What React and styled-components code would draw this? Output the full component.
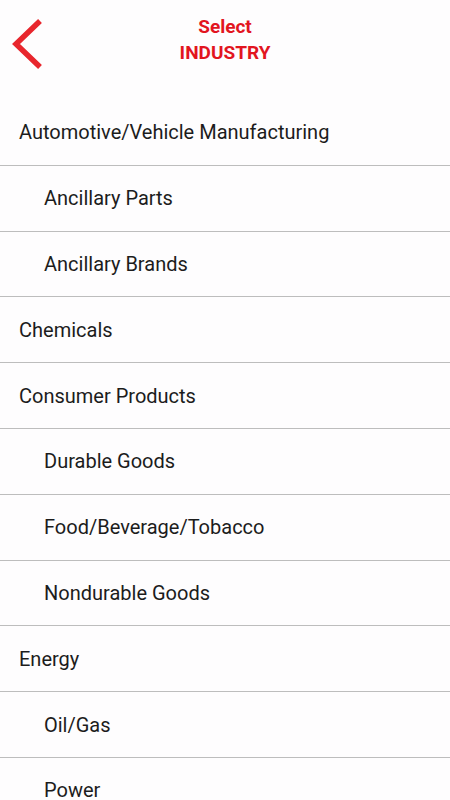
import React from 'react';
import styled, { createGlobalStyle } from 'styled-components';

const GlobalStyle = createGlobalStyle`
  body {
    margin: 0;
    background: #fefdfe;
    font-family: Roboto, "Noto Sans", sans-serif;
  }
`;

const items = [
  { label: 'Automotive/Vehicle Manufacturing' },
  { label: 'Ancillary Parts', sub: true },
  { label: 'Ancillary Brands', sub: true },
  { label: 'Chemicals' },
  { label: 'Consumer Products' },
  { label: 'Durable Goods', sub: true },
  { label: 'Food/Beverage/Tobacco', sub: true },
  { label: 'Nondurable Goods', sub: true },
  { label: 'Energy' },
  { label: 'Oil/Gas', sub: true },
  { label: 'Power', sub: true },
];

const App = () => {
  return (
    <Screen>
      <GlobalStyle />
      <Header>
        <BackButton aria-label="Back">
          <svg width="34" height="54" viewBox="0 0 34 54">
            <polyline
              points="30,4 6,27 30,50"
              fill="none"
              stroke="#e8262d"
              strokeWidth="5.5"
            />
          </svg>
        </BackButton>
        <Title>
          <span>Select</span>
          <span>INDUSTRY</span>
        </Title>
      </Header>
      <List>
        {items.map((el, index) => (
          <Row key={index} $sub={el.sub}>
            {el.label}
          </Row>
        ))}
      </List>
    </Screen>
  );
};

const Screen = styled.div`
  width: 450px;
  height: 800px;
  overflow: hidden;
  background: #fefdfe;
`;

const Header = styled.header`
  position: relative;
  height: 100px;
  display: flex;
  justify-content: center;
`;

const BackButton = styled.button`
  position: absolute;
  left: 10px;
  top: 17px;
  padding: 0;
  border: none;
  background: none;
  display: flex;
`;

const Title = styled.h1`
  margin: 14px 0 0;
  display: flex;
  flex-direction: column;
  align-items: center;
  color: #e2151f;
  font-size: 19px;
  font-weight: 700;
  line-height: 26px;
`;

const List = styled.ul`
  margin: 0;
  padding: 0;
  list-style: none;
`;

const Row = styled.li`
  height: 64.8px;
  display: flex;
  align-items: center;
  padding-left: ${(p) => (p.$sub ? '44px' : '19px')};
  border-bottom: 1px solid #bdbdbd;
  color: #1c1c1c;
  font-size: 20px;
`;

export default App;
